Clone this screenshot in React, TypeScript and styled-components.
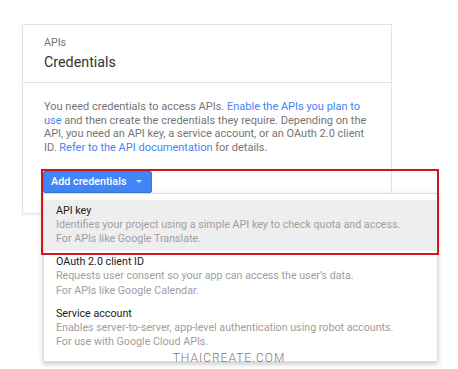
import React from "react";
import styled, { createGlobalStyle } from "styled-components";

const Global = createGlobalStyle`
  html, body { margin: 0; padding: 0; background: #ffffff; }
  body { font-family: Roboto, "Liberation Sans", Arial, sans-serif; }
  * { box-sizing: border-box; }
`;

const Page = styled.div`
  position: relative;
  width: 458px;
  height: 369px;
  padding: 24px 0 0 22px;
  overflow: hidden;
`;

const Card = styled.div`
  width: 370px;
  background: #fff;
  border: 1px solid #e3e3e3;
  box-shadow: 0 1px 2px rgba(0, 0, 0, 0.06);
`;

const Header = styled.div`
  padding: 11px 21px 10px;
  border-bottom: 1px solid #e0e0e0;
`;

const Kicker = styled.div`
  font-size: 10.7px;
  line-height: 14px;
  color: #757575;
`;

const Title = styled.div`
  margin-top: 2px;
  font-size: 14.3px;
  line-height: 20px;
  color: #333;
`;

const Body = styled.div`
  padding: 17px 19px 20px 21px;
`;

const Paragraph = styled.p`
  margin: 0;
  font-size: 11px;
  line-height: 13.7px;
  color: #757575;
`;

const Link = styled.a`
  color: #4285f4;
  text-decoration: none;
`;

const ButtonArea = styled.div`
  position: relative;
  margin: 16px 0 0 -1px;
  height: 22px;
`;

const Button = styled.button`
  display: flex;
  align-items: center;
  gap: 9px;
  height: 22px;
  margin: 0;
  padding: 0 9px 0 7px;
  background: #4285f4;
  border: 1px solid #3a76dd;
  border-radius: 2px;
  color: #fff;
  font-family: Roboto, "Liberation Sans", Arial, sans-serif;
  font-size: 10.8px;
  font-weight: 500;
`;

const Caret = styled.span`
  width: 0;
  height: 0;
  border-left: 3px solid transparent;
  border-right: 3px solid transparent;
  border-top: 3px solid rgba(255, 255, 255, 0.75);
`;

const Menu = styled.div`
  position: absolute;
  left: 0;
  top: 22px;
  width: 395px;
  padding: 6px 0;
  background: #fff;
  border: 1px solid #dedede;
  box-shadow: 0 2px 5px rgba(0, 0, 0, 0.22);
  z-index: 1;
`;

const Item = styled.div<{ $active?: boolean }>`
  padding: 3px 12px 5px;
  background: ${(p) => (p.$active ? "#eeeeee" : "transparent")};
`;

const ItemTitle = styled.div`
  font-size: 10.7px;
  line-height: 15px;
  color: #212121;
`;

const ItemDesc = styled.div`
  font-size: 10.7px;
  line-height: 14.3px;
  color: #9e9e9e;
`;

const Highlight = styled.div`
  position: absolute;
  left: -2px;
  top: -2px;
  width: 398px;
  height: 86px;
  border: 2px solid #d0151c;
  z-index: 2;
  pointer-events: none;
`;

const Watermark = styled.div`
  position: absolute;
  left: 0;
  right: 0;
  top: 351px;
  text-align: center;
  font-family: Roboto, "Liberation Sans", Arial, sans-serif;
  font-weight: 300;
  font-size: 12px;
  line-height: 15px;
  letter-spacing: 1px;
  color: #7a7a7a;
  z-index: 3;
`;

const items = [
  {
    title: "API key",
    lines: [
      "Identifies your project using a simple API key to check quota and access.",
      "For APIs like Google Translate.",
    ],
    active: true,
  },
  {
    title: "OAuth 2.0 client ID",
    lines: [
      "Requests user consent so your app can access the user\u2019s data.",
      "For APIs like Google Calendar.",
    ],
  },
  {
    title: "Service account",
    lines: [
      "Enables server-to-server, app-level authentication using robot accounts.",
      "For use with Google Cloud APIs.",
    ],
  },
];

export default function App() {
  return (
    <>
      <Global />
      <Page>
        <Card>
          <Header>
            <Kicker>APIs</Kicker>
            <Title>Credentials</Title>
          </Header>
          <Body>
            <Paragraph>
              You need credentials to access APIs.{" "}
              <Link href="#">Enable the APIs you plan to use</Link> and then
              create the credentials they require. Depending on the API, you
              need an API key, a service account, or an OAuth 2.0 client ID.{" "}
              <Link href="#">Refer to the API documentation</Link> for details.
            </Paragraph>
            <ButtonArea>
              <Button>
                Add credentials
                <Caret />
              </Button>
              <Menu>
                {items.map((it) => (
                  <Item key={it.title} $active={it.active}>
                    <ItemTitle>{it.title}</ItemTitle>
                    {it.lines.map((l) => (
                      <ItemDesc key={l}>{l}</ItemDesc>
                    ))}
                  </Item>
                ))}
              </Menu>
              <Highlight />
            </ButtonArea>
          </Body>
        </Card>
        <Watermark>THAICREATE.COM</Watermark>
      </Page>
    </>
  );
}
